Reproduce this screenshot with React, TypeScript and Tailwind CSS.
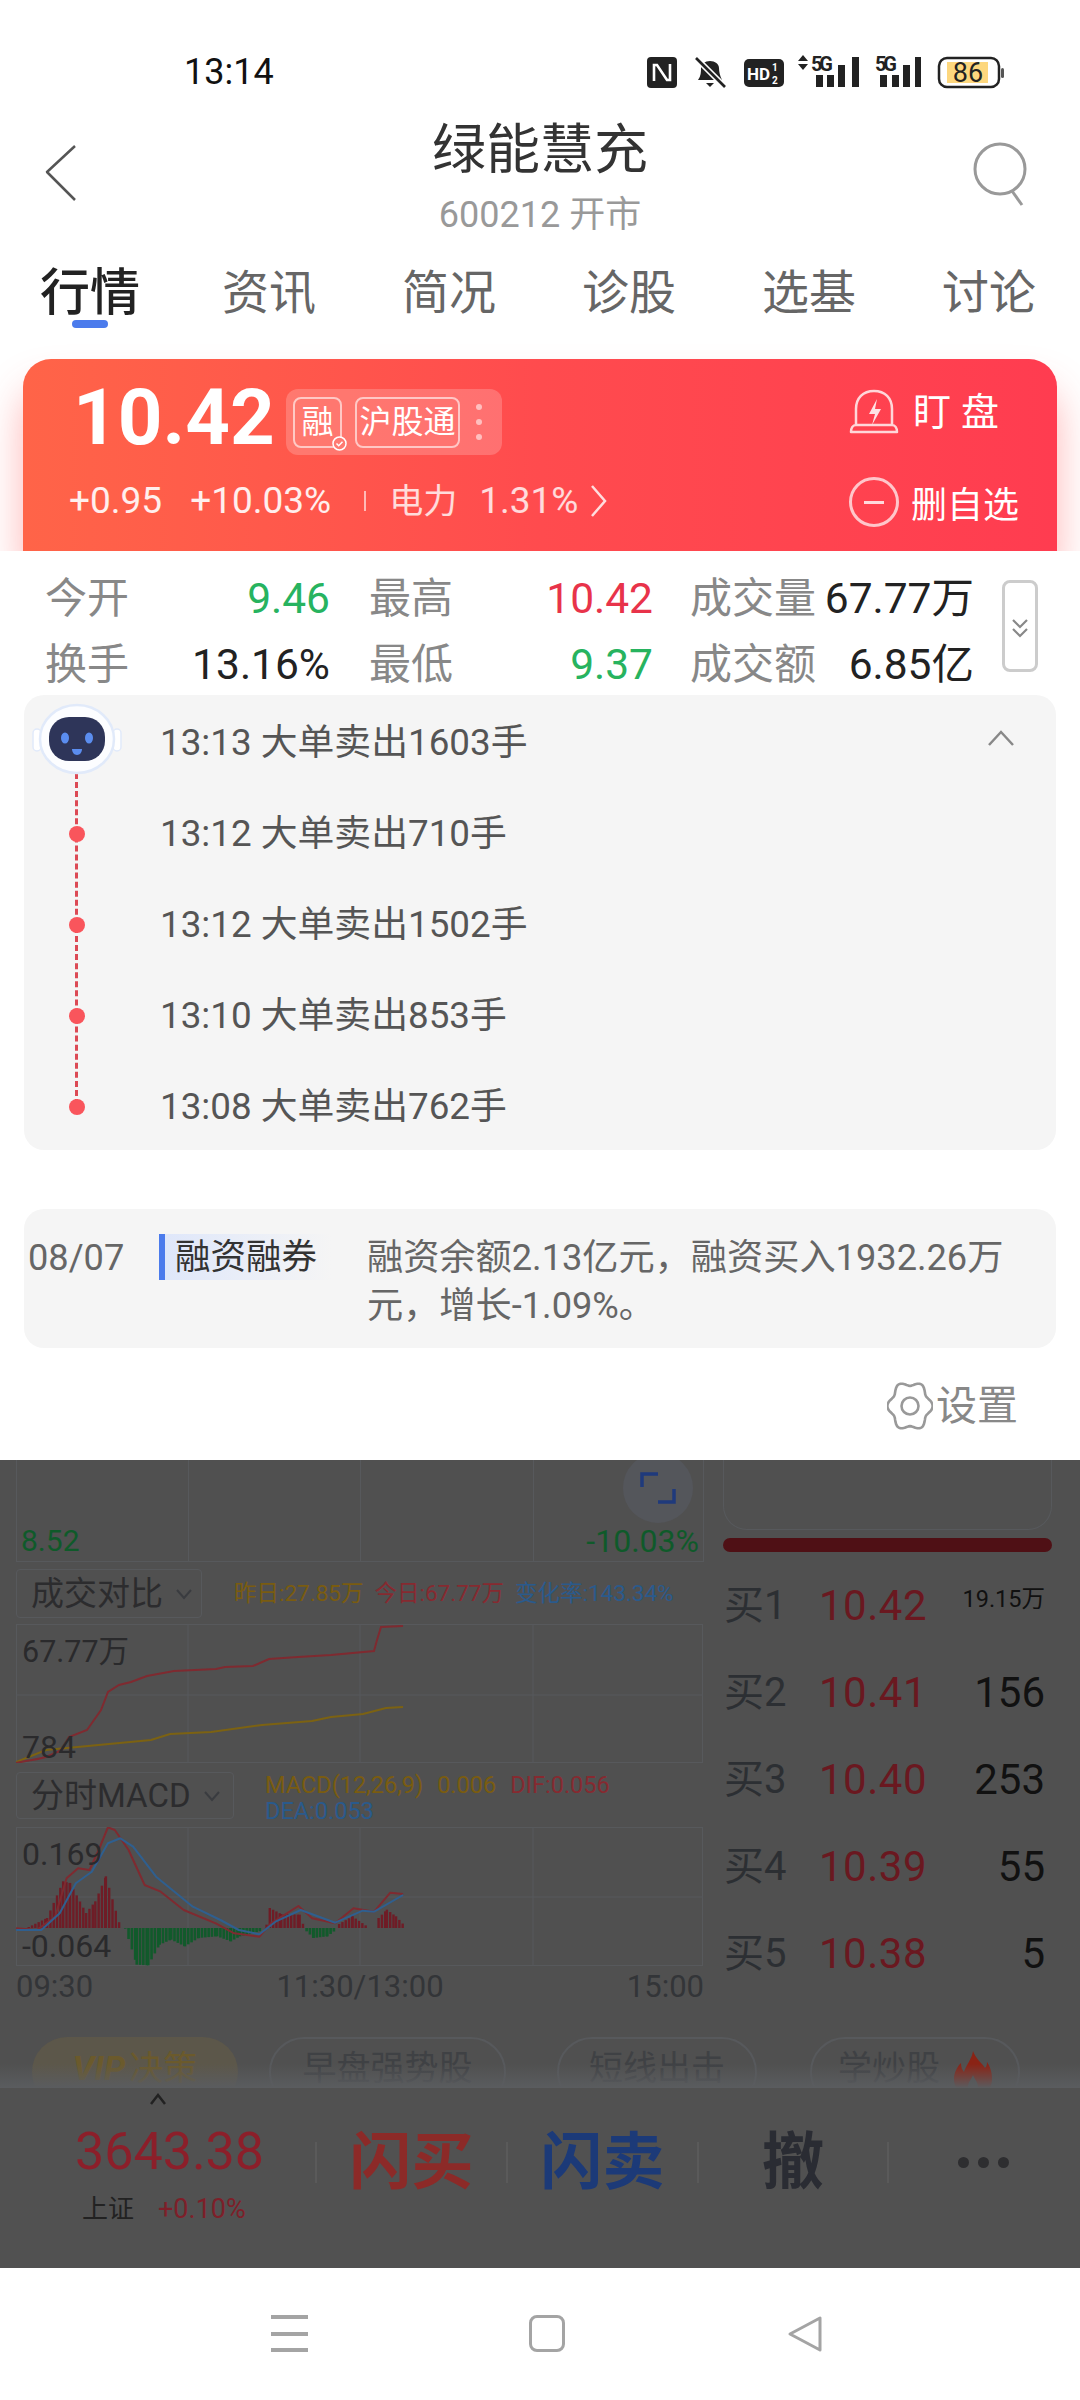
const sans = "font-['Roboto','Noto_Sans_CJK_SC',sans-serif]";

const tabs = ['资讯', '简况', '诊股', '选基', '讨论'];
const orders = [
  {label: '买1', price: '10.42', qty: '19.15万', small: true},
  {label: '买2', price: '10.41', qty: '156'},
  {label: '买3', price: '10.40', qty: '253'},
  {label: '买4', price: '10.39', qty: '55'},
  {label: '买5', price: '10.38', qty: '5'},
];
const alerts = ['13:13 大单卖出1603手', '13:12 大单卖出710手', '13:12 大单卖出1502手', '13:10 大单卖出853手', '13:08 大单卖出762手'];

// zoom-space points for the histogram envelope: x -> height
const redBars = [
  [[60, 3], [100, 30], [135, 140], [150, 135], [185, 45], [205, 80], [228, 155], [260, 2]],
  [[578, 10], [585, 60], [610, 42], [650, 40], [660, 2]],
  [[736, 12], [765, 35], [800, 2]],
  [[822, 30], [840, 55], [860, 35], [880, 5]],
];
const greenBars = [
  [[270, 2], [295, 110], [320, 112], [345, 50], [370, 35], [400, 55], [430, 30], [470, 25], [500, 40], [520, 25], [568, 8]],
  [[665, 10], [680, 30], [710, 25], [730, 5]],
];

function envelope(points: number[][]) {
  const bars: {x: number; h: number}[] = [];
  for (let i = 0; i < points.length - 1; i++) {
    const [x0, h0] = points[i];
    const [x1, h1] = points[i + 1];
    for (let x = x0; x < x1; x += 7.2) {
      bars.push({x: x / 2.178, h: (h0 + ((h1 - h0) * (x - x0)) / (x1 - x0)) / 3});
    }
  }
  return bars;
}

function GridLines({top, mid, bottom}: {top: number; mid?: number; bottom: number}) {
  return (
    <g stroke="#57595c" strokeWidth="1" fill="none">
      <rect x="16.5" y={top} width="686" height={bottom - top} />
      {mid ? <line x1="16" x2="703" y1={mid} y2={mid} /> : null}
      <line x1="188" x2="188" y1={top} y2={bottom} />
      <line x1="360" x2="360" y1={top} y2={bottom} />
      <line x1="533" x2="533" y1={top} y2={bottom} />
    </g>
  );
}

function GearIcon() {
  // six soft lobes, slightly taller than wide
  const points: string[] = [];
  for (let a = 0; a < 360; a += 5) {
    const t = (a * Math.PI) / 180;
    const r = 20.5 + 2.2 * Math.cos(6 * t);
    points.push(`${(23 + r * Math.cos(t)).toFixed(1)},${(25 + r * 1.1 * Math.sin(t)).toFixed(1)}`);
  }
  return (
    <svg width="46" height="50" viewBox="0 0 46 50" fill="none" stroke="#999" strokeWidth="2.6">
      <polygon points={points.join(' ')} strokeLinejoin="round" />
      <circle cx="23" cy="25" r="8.5" />
    </svg>
  );
}

function StatusBar() {
  return (
    <div className="relative h-[112px] shrink-0">
      <div className="absolute left-[184px] top-[52px] text-[36px] leading-[40px] text-[#111]">13:14</div>
      <svg className="absolute left-[640px] top-[50px]" width="370" height="42" viewBox="640 50 370 42">
        <rect x="647" y="57" width="30" height="31" rx="4" fill="#222" />
        <path d="M654 81V65h3l10 15h3V64" stroke="#fff" strokeWidth="2.6" fill="none" />
        <path d="M698 80c3-4 3-8 3-12 0-4 4-7 9-7s9 3 9 7c0 4 1 8 3 12zM706 83h8l-4 4z" fill="#222" />
        <line x1="695" y1="57" x2="725" y2="87" stroke="#fff" strokeWidth="6" />
        <line x1="696" y1="58" x2="725" y2="87" stroke="#222" strokeWidth="2.6" />
        <rect x="744" y="59" width="40" height="28" rx="5" fill="#222" />
        <text x="747" y="80" fontSize="17" fontWeight="700" fill="#fff" fontFamily="Roboto">HD</text>
        <text x="772" y="71" fontSize="10" fontWeight="700" fill="#fff" fontFamily="Roboto">1</text>
        <text x="772" y="84" fontSize="10" fontWeight="700" fill="#fff" fontFamily="Roboto">2</text>
        <path d="M803 55l5 6h-10zM803 70l5-6h-10z" fill="#222" />
        <text x="811" y="71" fontSize="20" fontWeight="700" fill="#222" fontFamily="Roboto" textLength="22">5G</text>
        <path d="M816 75h7v12h-7zM827 75h7v12h-7zM838 65h7v22h-7zM852 57h7v30h-7z" fill="#222" />
        <text x="875" y="71" fontSize="20" fontWeight="700" fill="#222" fontFamily="Roboto" textLength="22">5G</text>
        <path d="M880 75h7v12h-7zM892 75h7v12h-7zM903 65h7v22h-7zM915 57h6v30h-6z" fill="#222" />
        <rect x="939" y="58" width="60" height="29" rx="8" fill="#fff" stroke="#222" strokeWidth="2.5" />
        <rect x="947" y="62" width="41" height="21" fill="#fdd77e" />
        <rect x="1001" y="68" width="3" height="10" rx="1.5" fill="#555" />
        <text x="968" y="82" fontSize="27" fill="#222" textAnchor="middle" fontFamily="Roboto">86</text>
      </svg>
    </div>
  );
}

function Header() {
  return (
    <div className="relative h-[138px] shrink-0">
      <div className="absolute left-[45px] top-[32px]">
        <svg width="32" height="58" viewBox="0 0 32 58" fill="none" stroke="#555" strokeWidth="2.5">
          <path d="M30 2L2 28l28 28" strokeLinejoin="round" />
        </svg>
      </div>
      <div className="flex flex-col items-center">
        <div className="mt-[3px] text-[54px] leading-[72px] text-[#333]">绿能慧充</div>
        <div className="mt-[6px] text-[36px] leading-[44px] text-[#999]">600212 开市</div>
      </div>
      <div className="absolute left-[972px] top-[30px]">
        <svg width="56" height="64" viewBox="0 0 56 64" fill="none" stroke="#999" strokeWidth="3">
          <ellipse cx="28" cy="27" rx="25" ry="25" />
          <path d="M40 49l10 14" />
        </svg>
      </div>
    </div>
  );
}

function Tabs() {
  return (
    <div className="relative flex h-[85px] shrink-0 items-start justify-between pl-[40px] pr-[44px] pt-[8px] text-[47px] leading-[70px] text-[#666]">
      <div className="w-[96px] whitespace-nowrap text-[50px] font-medium text-[#222]">行情</div>
      {tabs.map((t) => (
        <div key={t}>{t}</div>
      ))}
      <div className="absolute left-[72px] top-[70px] h-[8px] w-[36px] rounded-full bg-[#4b7bec]" />
    </div>
  );
}

function QuoteCard() {
  return (
    <div className="h-[216px] shrink-0 overflow-hidden pt-[24px]">
      <div className="relative mx-[23px] h-[192px] rounded-t-[28px] bg-gradient-to-r from-[#ff6448] via-[#ff4b4e] to-[#ff3c50] text-white shadow-[0_30px_40px_rgba(255,70,70,0.4)]">
        <div className="absolute left-[50px] top-[19px] text-[78px] leading-[80px] font-bold">10.42</div>
        <div className="absolute left-[263px] top-[30px] flex h-[66px] w-[216px] items-center gap-[13px] rounded-[12px] bg-white/20 pl-[7px] text-[32px]">
          <div className="relative flex h-[51px] w-[49px] items-center justify-center rounded-[8px] border-2 border-white/60">
            融
            <svg className="absolute bottom-[-5px] right-[-7px]" width="15" height="15" viewBox="0 0 15 15" fill="none">
              <circle cx="7.5" cy="7.5" r="6.5" fill="#ff7a72" stroke="#fff" strokeWidth="1.5" />
              <path d="M4.5 7.5l2.2 2.2 3.8-4" stroke="#fff" strokeWidth="1.5" />
            </svg>
          </div>
          <div className="flex h-[51px] w-[105px] items-center justify-center rounded-[8px] border-2 border-white/60">沪股通</div>
          <div className="ml-[3px] flex flex-col gap-[9px]">
            <div className="h-[6px] w-[6px] rounded-full bg-white/55" />
            <div className="h-[6px] w-[6px] rounded-full bg-white/55" />
            <div className="h-[6px] w-[6px] rounded-full bg-white/55" />
          </div>
        </div>
        <div className="absolute left-[46px] top-[121px] flex h-[42px] items-center text-[37px] text-white/90">
          <span>+0.95</span>
          <span className="ml-[28px]">+10.03%</span>
          <span className="ml-[33px] h-[20px] w-[2px] bg-white/60" />
          <span className="ml-[23px] text-[34px] text-white/80">电力</span>
          <span className="ml-[22px] text-white/80">1.31%</span>
          <svg className="ml-[12px]" width="18" height="34" viewBox="0 0 18 34" fill="none" stroke="#ffffffd0" strokeWidth="2.5">
            <path d="M2 2l13 15L2 32" />
          </svg>
        </div>
        <div className="absolute left-[826px] top-[28px] flex items-center">
          <svg width="50" height="46" viewBox="0 0 50 46" fill="none" stroke="#ffffffc8" strokeWidth="2.5">
            <path d="M7 36V20C7 9 14 2 25 2s18 7 18 18v16M2 43c0-4 2-7 5-7h36c3 0 5 3 5 7z" strokeLinejoin="round" />
            <path d="M28 10l-8 15h6l-3 11 9-16h-6z" fill="#ffffffd8" stroke="none" />
          </svg>
          <span className="ml-[14px] text-[38px] leading-[50px]">盯</span>
          <span className="ml-[10px] text-[38px] leading-[50px]">盘</span>
        </div>
        <div className="absolute left-[826px] top-[114px] flex items-center">
          <div className="flex h-[50px] w-[50px] items-center justify-center rounded-full border-[3px] border-white/70">
            <div className="h-[3px] w-[20px] bg-white/80" />
          </div>
          <span className="ml-[12px] mt-[8px] text-[36px] leading-[50px]">删自选</span>
        </div>
      </div>
    </div>
  );
}

function Stat({label, value, color, className}: {label: string; value: string; color: string; className: string}) {
  return (
    <div className={`flex items-center justify-between ${className}`}>
      <span className="text-[42px] text-[#888]">{label}</span>
      <span className={color}>{value}</span>
    </div>
  );
}

function Stats() {
  return (
    <div className="relative h-[144px] shrink-0 pl-[45px] pt-[15px] text-[42.5px] leading-[66px]">
      <div className="flex h-[66px]">
        <Stat label="今开" value="9.46" color="text-[#27b35f]" className="w-[285px]" />
        <Stat label="最高" value="10.42" color="text-[#e8334a]" className="ml-[39px] w-[284px]" />
        <Stat label="成交量" value="67.77万" color="text-[#222]" className="ml-[37px] w-[284px]" />
      </div>
      <div className="flex h-[66px]">
        <Stat label="换手" value="13.16%" color="text-[#222]" className="w-[285px]" />
        <Stat label="最低" value="9.37" color="text-[#27b35f]" className="ml-[39px] w-[284px]" />
        <Stat label="成交额" value="6.85亿" color="text-[#222]" className="ml-[37px] w-[284px]" />
      </div>
      <div className="absolute left-[1002px] top-[29px] flex h-[92px] w-[36px] items-center justify-center rounded-[8px] border-[3px] border-[#ccc]">
        <svg className="mt-[4px]" width="18" height="20" viewBox="0 0 18 20" fill="none" stroke="#888" strokeWidth="2.2">
          <path d="M2 2l7 7 7-7M2 11l7 7 7-7" />
        </svg>
      </div>
    </div>
  );
}

function Alerts() {
  return (
    <div className="relative mx-[24px] h-[455px] shrink-0 rounded-[20px] bg-[#f5f5f5] pt-[2px]">
      <div className="absolute left-[51px] top-[78px] h-[332px] border-l-[3px] border-dashed border-[#dc4a55]" />
      {alerts.map((text, i) => (
        <div key={i} className="relative flex h-[91px] items-center pl-[136px] text-[36.8px] text-[#555]">
          {i > 0 ? <div className="absolute left-[45px] top-[38px] h-[16px] w-[16px] rounded-full bg-[#f9555c]" /> : null}
          {text}
        </div>
      ))}
      <svg className="absolute left-[8px] top-[8px]" width="90" height="72" viewBox="0 0 90 72">
        <rect x="1" y="26" width="8" height="22" rx="4" fill="#fff" stroke="#e1eafa" strokeWidth="1.5" />
        <rect x="81" y="26" width="8" height="22" rx="4" fill="#fff" stroke="#e1eafa" strokeWidth="1.5" />
        <ellipse cx="45" cy="36" rx="37" ry="34" fill="#fcfdff" stroke="#e1eafa" strokeWidth="2.5" />
        <rect x="17" y="14" width="56" height="44" rx="20" fill="#2e3559" />
        <ellipse cx="33" cy="35" rx="4" ry="5.5" fill="#5b8def" />
        <ellipse cx="57" cy="35" rx="4" ry="5.5" fill="#5b8def" />
        <path d="M40 46h10c0 3-2 6-5 6s-5-3-5-6z" fill="#5b8def" />
      </svg>
      <svg className="absolute left-[963px] top-[34px]" width="28" height="18" viewBox="0 0 28 18" fill="none" stroke="#888" strokeWidth="2.5">
        <path d="M2 16L14 3l12 13" />
      </svg>
    </div>
  );
}

function MarginCard() {
  return (
    <div className="mx-[24px] mt-[59px] flex h-[139px] shrink-0 rounded-[20px] bg-[#f5f5f5] pt-[25px] text-[36.2px] leading-[48px]">
      <div className="ml-[4px] w-[131px] text-[#666]">08/07</div>
      <div className="flex h-[46px] w-[172px] items-center border-l-[6px] border-[#4b7bec] bg-gradient-to-r from-[#dfe7fa] to-[#f5f5f5] pl-[10px] text-[35.5px] text-[#333]">融资融券</div>
      <div className="ml-[36px] w-[650px] text-[#666]">融资余额2.13亿元，融资买入1932.26万元，增长-1.09%。</div>
    </div>
  );
}

function SettingsRow() {
  return (
    <div className="flex h-[112px] shrink-0 items-start justify-end pr-[62px] pt-[33px] text-[41px] leading-[50px] text-[#888]">
      <GearIcon />
      <span className="ml-[3px]">设置</span>
    </div>
  );
}

function VolumeChart() {
  return (
    <svg className="absolute left-0 top-0" width="688" height="139" viewBox="16 1624 688 139" fill="none">
      <GridLines top={1624.5} mid={1695} bottom={1762.5} />
      <path d="M16 1762L46 1750 151 1740 170 1734 211 1732 262 1725 312 1721 331 1717 363 1714 386 1708 403 1707" stroke="#7c6212" strokeWidth="2" />
      <path d="M16 1763C30 1760 40 1759 46 1757L62 1750 69 1737 87 1730 101 1710 108 1692 119 1685 131 1682 147 1676 174 1671 216 1669 225 1667 253 1666 269 1659 298 1657 331 1655 374 1651 377 1640 381 1627 403 1626" stroke="#7f2a30" strokeWidth="2" />
    </svg>
  );
}

function MacdChart() {
  const px = (pts: number[][]) => pts.map(([x, y]) => `${(x / 2.178).toFixed(1)},${(1740 + y / 3).toFixed(1)}`).join(' ');
  const dif = [[35, 565], [80, 570], [120, 530], [145, 415], [170, 385], [195, 390], [215, 330], [235, 262], [250, 270], [280, 330], [315, 435], [350, 455], [400, 510], [470, 550], [510, 580], [565, 590], [590, 550], [650, 498], [680, 535], [730, 550], [770, 505], [815, 515], [850, 458], [878, 462]];
  const dea = [[35, 570], [90, 570], [130, 520], [165, 430], [200, 395], [235, 310], [262, 295], [290, 320], [340, 410], [420, 500], [480, 540], [520, 570], [565, 583], [600, 545], [655, 510], [730, 548], [790, 512], [815, 515], [878, 465]];
  return (
    <svg className="absolute left-0 top-0" width="688" height="139" viewBox="16 1827 688 139" fill="none">
      <GridLines top={1827.5} mid={1897} bottom={1965.5} />
      {redBars.flatMap((seg, s) =>
        envelope(seg).map((b, i) => <rect key={`r${s}-${i}`} x={b.x} y={1928 - b.h} width="2.4" height={b.h} fill="#6f1c26" />),
      )}
      {greenBars.flatMap((seg, s) =>
        envelope(seg).map((b, i) => <rect key={`g${s}-${i}`} x={b.x} y={1928} width="2.6" height={b.h} fill="#115a2b" />),
      )}
      <polyline points={px(dif)} stroke="#7f2a30" strokeWidth="2" strokeLinejoin="round" />
      <polyline points={px(dea)} stroke="#2f5f8f" strokeWidth="2" strokeLinejoin="round" />
    </svg>
  );
}

function Dropdown({label, className}: {label: string; className: string}) {
  return (
    <div className={`flex items-center rounded-[4px] border border-[#57595c] pl-[14px] text-[33px] text-[#2c2c2e] ${className}`}>
      {label}
      <svg className="ml-[12px]" width="18" height="12" viewBox="0 0 18 12" fill="none" stroke="#3a3c40" strokeWidth="2">
        <path d="M2 2l7 8 7-8" />
      </svg>
    </div>
  );
}

function ChartColumn() {
  return (
    <div className="ml-[16px] w-[688px] shrink-0">
      <div className="relative h-[102px] border-x border-b border-[#57595c]">
        <div className="absolute inset-y-0 left-[171px] w-px bg-[#57595c]" />
        <div className="absolute inset-y-0 left-[343px] w-px bg-[#57595c]" />
        <div className="absolute inset-y-0 left-[516px] w-px bg-[#57595c]" />
        <div className="absolute bottom-[2px] left-[4px] text-[30px] leading-[36px] text-[#0f5a2a]">8.52</div>
        <div className="absolute bottom-[2px] right-[4px] text-[32px] leading-[36px] text-[#0f5a2a]">-10.03%</div>
        <div className="absolute left-[606px] top-[-7px] flex h-[70px] w-[70px] items-center justify-center rounded-full bg-[#54565b]">
          <svg width="36" height="32" viewBox="0 0 36 32" fill="none" stroke="#1f3a7c" strokeWidth="3.5">
            <path d="M18 2H2v13M18 30h16V17" />
          </svg>
        </div>
      </div>
      <div className="mt-[7px] flex h-[49px] items-center">
        <Dropdown label="成交对比" className="h-[49px] w-[186px]" />
        <div className="ml-[32px] flex gap-[11px] text-[22.5px]">
          <span className="text-[#7a5c10]">昨日:27.85万</span>
          <span className="text-[#862a30]">今日:67.77万</span>
          <span className="text-[#2a5a8c]">变化率:143.34%</span>
        </div>
      </div>
      <div className="relative mt-[6px] h-[139px]">
        <VolumeChart />
        <div className="absolute left-[6px] top-[9px] text-[30.5px] leading-[38px] text-[#2a2a2c]">67.77万</div>
        <div className="absolute left-[6px] top-[104px] text-[32px] leading-[38px] text-[#2a2a2c]">784</div>
      </div>
      <div className="mt-[9px] flex h-[47px] items-start">
        <Dropdown label="分时MACD" className="h-[47px] w-[218px]" />
        <div className="ml-[31px] w-[380px] text-[23.5px] leading-[26px]">
          <span className="text-[#7a5c10]">MACD(12,26,9)</span>
          <span className="ml-[14px] text-[#7a5c10]">0.006</span>
          <span className="ml-[14px] text-[#862a30]">DIF:0.056</span>
          <div className="text-[#2a5a8c]">DEA:0.053</div>
        </div>
      </div>
      <div className="relative mt-[8px] h-[139px]">
        <MacdChart />
        <div className="absolute left-[6px] top-[8px] text-[32px] leading-[38px] text-[#2a2a2c]">0.169</div>
        <div className="absolute left-[6px] top-[100px] text-[32px] leading-[38px] text-[#2a2a2c]">-0.064</div>
      </div>
      <div className="mt-[2px] flex justify-between text-[31px] leading-[38px] text-[#333538]">
        <span>09:30</span>
        <span>11:30/13:00</span>
        <span>15:00</span>
      </div>
    </div>
  );
}

function OrderBook() {
  return (
    <div className="ml-[19px] w-[329px] shrink-0">
      <div className="h-[70px] rounded-b-[24px] border-x border-b border-[#57595c]" />
      <div className="mt-[8px] h-[14px] rounded-full bg-[#4f1015]" />
      <div className="mt-[10px]">
        {orders.map((o) => (
          <div key={o.label} className="flex h-[87px] items-center pl-[1px] pr-[7px]">
            <span className="w-[95px] text-[40px] text-[#2c2f33]">{o.label}</span>
            <span className="text-[42px] tracking-[0.5px] text-[#6a1820]">{o.price}</span>
            <span className={`ml-auto text-[#111] ${o.small ? 'mb-[12px] text-[23.5px]' : 'text-[42px]'}`}>{o.qty}</span>
          </div>
        ))}
      </div>
    </div>
  );
}

function Chips() {
  return (
    <div className="relative mt-[27px] h-[51px] shrink-0 overflow-hidden">
      <div className="flex h-[80px] items-start pl-[32px] text-[34px] leading-[40px] text-[#3f4144]">
        <div className="flex h-[70px] w-[206px] justify-center rounded-full bg-[#5c574a] pt-[11px] text-[#6b5a2c]">
          <span className="mr-[4px] font-bold italic">VIP</span>决策
        </div>
        <div className="ml-[31px] flex h-[70px] w-[237px] justify-center rounded-full border-2 border-[#57595c] pt-[9px]">早盘强势股</div>
        <div className="ml-[51px] flex h-[70px] w-[200px] justify-center rounded-full border-2 border-[#57595c] pt-[9px]">短线出击</div>
        <div className="ml-[53px] flex h-[70px] w-[210px] justify-center rounded-full border-2 border-[#57595c] pt-[9px]">
          学炒股
          <svg className="ml-[14px] mt-[3px]" width="38" height="46" viewBox="0 0 38 46" fill="#8a2315">
            <path d="M19 0c3 8 7 10 12 17 2-2 2-4 2-6 4 6 5 12 5 17 0 10-8 18-19 18S0 38 0 28c0-6 3-12 7-16 0 4 1 7 3 9 2-7 8-13 9-21zM19 24c-2 5-5 7-5 12 0 3 2 6 5 6s5-3 5-6c0-5-3-7-5-12z" />
          </svg>
        </div>
      </div>
      <div className="absolute inset-x-0 bottom-0 h-[24px] bg-gradient-to-b from-[#52535500] to-[#5a5c5f]" />
    </div>
  );
}

function BottomBar() {
  return (
    <div className="relative h-[180px] shrink-0 bg-[#515151]">
      <svg className="absolute left-[149px] top-[4px]" width="18" height="14" viewBox="0 0 18 14" fill="none" stroke="#222" strokeWidth="2.5">
        <path d="M2 12l7-9 7 9" />
      </svg>
      <div className="absolute left-[75px] top-[32px] text-[52px] leading-[64px] text-[#8c1f2a]">3643.38</div>
      <div className="absolute left-[82px] top-[104px] flex items-center leading-[34px]">
        <span className="text-[26px] text-[#222]">上证</span>
        <span className="ml-[24px] text-[27px] text-[#7e1f29]">+0.10%</span>
      </div>
      <div className="flex pl-[315px] pt-[54px]">
        {[
          {text: '闪买', color: 'text-[#8c2a28]', width: 'w-[191px]'},
          {text: '闪卖', color: 'text-[#1c3a78]', width: 'w-[191px]'},
          {text: '撤', color: 'text-[#2a2c33]', width: 'w-[190px]'},
        ].map((a) => (
          <div key={a.text} className={`flex h-[41px] items-center justify-center border-l-2 border-[#5a5a5a] text-[62px] leading-[41px] font-bold ${a.width} ${a.color}`}>
            {a.text}
          </div>
        ))}
        <div className="flex h-[41px] items-center gap-[9px] border-l-2 border-[#5a5a5a] pl-[69px]">
          <div className="h-[11px] w-[11px] rounded-full bg-[#2e2e30]" />
          <div className="h-[11px] w-[11px] rounded-full bg-[#2e2e30]" />
          <div className="h-[11px] w-[11px] rounded-full bg-[#2e2e30]" />
        </div>
      </div>
    </div>
  );
}

function NavBar() {
  return (
    <div className="flex h-[132px] shrink-0 items-start pt-[47px]">
      <div className="ml-[271px] flex h-[37px] w-[37px] flex-col justify-between">
        <div className="h-[4px] bg-[#a4a4a4]" />
        <div className="h-[4px] bg-[#a4a4a4]" />
        <div className="h-[4px] bg-[#a4a4a4]" />
      </div>
      <div className="ml-[221px] h-[37px] w-[36px] rounded-[8px] border-[3px] border-[#a4a4a4]" />
      <svg className="ml-[222px]" width="36" height="38" viewBox="0 0 36 38" fill="none" stroke="#a4a4a4" strokeWidth="3" strokeLinejoin="round">
        <path d="M33 3v32L3 19z" />
      </svg>
    </div>
  );
}

export default function App() {
  return (
    <div className={`flex h-[2400px] w-[1080px] flex-col overflow-hidden bg-white ${sans}`}>
      <StatusBar />
      <Header />
      <Tabs />
      <QuoteCard />
      <Stats />
      <Alerts />
      <MarginCard />
      <SettingsRow />
      <div className="flex h-[808px] shrink-0 flex-col overflow-hidden bg-[#505050]">
        <div className="flex h-[550px] shrink-0">
          <ChartColumn />
          <OrderBook />
        </div>
        <Chips />
        <BottomBar />
      </div>
      <NavBar />
    </div>
  );
}
